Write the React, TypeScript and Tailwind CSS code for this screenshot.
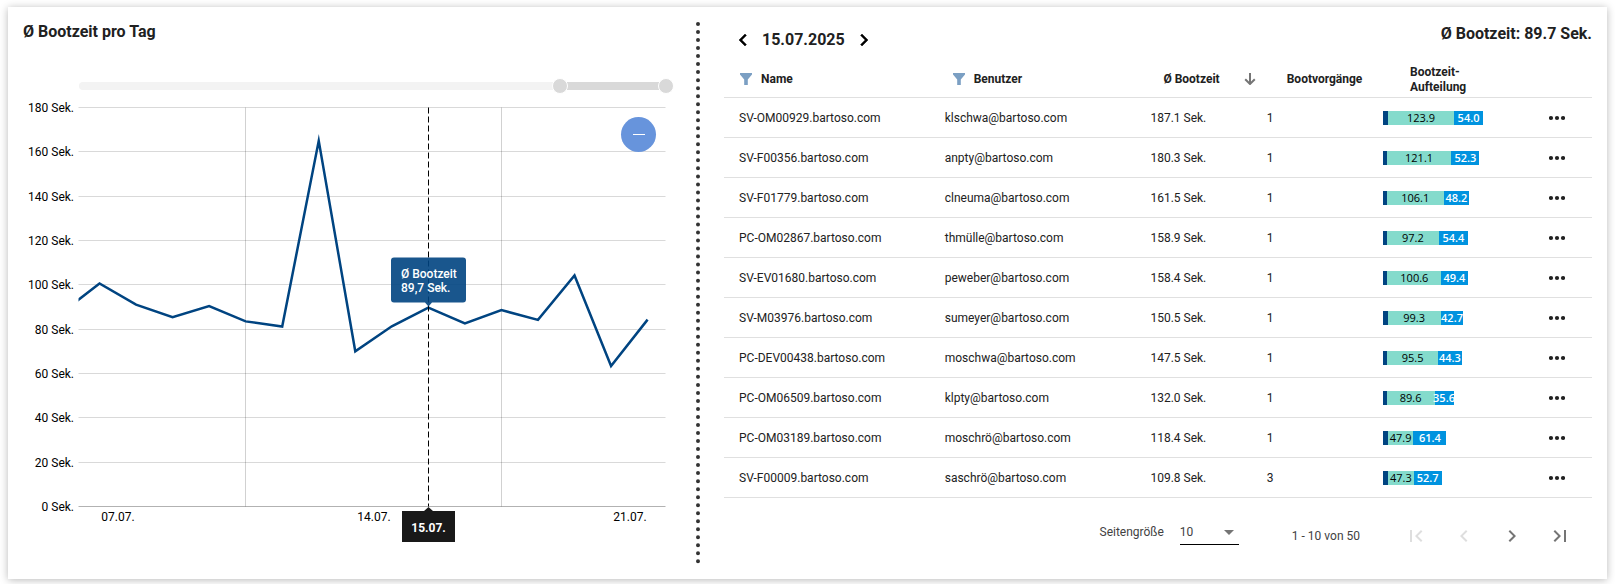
import { useState } from 'react';

type Boot = {
  name: string;
  benutzer: string;
  gesamt: number;
  anzahl: number;
  start: number;
  anmeldung: number;
};

const ROWS: Boot[] = [
  { name: 'SV-OM00929.bartoso.com', benutzer: 'klschwa@bartoso.com', gesamt: 187.1, anzahl: 1, start: 123.9, anmeldung: 54.0 },
  { name: 'SV-F00356.bartoso.com', benutzer: 'anpty@bartoso.com', gesamt: 180.3, anzahl: 1, start: 121.1, anmeldung: 52.3 },
  { name: 'SV-F01779.bartoso.com', benutzer: 'clneuma@bartoso.com', gesamt: 161.5, anzahl: 1, start: 106.1, anmeldung: 48.2 },
  { name: 'PC-OM02867.bartoso.com', benutzer: 'thmülle@bartoso.com', gesamt: 158.9, anzahl: 1, start: 97.2, anmeldung: 54.4 },
  { name: 'SV-EV01680.bartoso.com', benutzer: 'peweber@bartoso.com', gesamt: 158.4, anzahl: 1, start: 100.6, anmeldung: 49.4 },
  { name: 'SV-M03976.bartoso.com', benutzer: 'sumeyer@bartoso.com', gesamt: 150.5, anzahl: 1, start: 99.3, anmeldung: 42.7 },
  { name: 'PC-DEV00438.bartoso.com', benutzer: 'moschwa@bartoso.com', gesamt: 147.5, anzahl: 1, start: 95.5, anmeldung: 44.3 },
  { name: 'PC-OM06509.bartoso.com', benutzer: 'klpty@bartoso.com', gesamt: 132.0, anzahl: 1, start: 89.6, anmeldung: 35.6 },
  { name: 'PC-OM03189.bartoso.com', benutzer: 'moschrö@bartoso.com', gesamt: 118.4, anzahl: 1, start: 47.9, anmeldung: 61.4 },
  { name: 'SV-F00009.bartoso.com', benutzer: 'saschrö@bartoso.com', gesamt: 109.8, anzahl: 3, start: 47.3, anmeldung: 52.7 },
];

const MAX = 187.1;

// Mittelwerte pro Tag, der erste liegt links ausserhalb des sichtbaren Bereichs
const TAGE = [87.9, 100.6, 91.1, 85.4, 90.4, 83.5, 81.2, 165, 70, 81.3, 89.7, 82.6, 88.6, 84.2, 104.2, 63.4, 84.3];

const LEFT = 55.5;
const RIGHT = 642.5;
const TOP = 13.5;
const BOTTOM = 412.5;

const xOf = (i: number) => 76.5 + (i - 1) * 36.54;
const yOf = (v: number) => BOTTOM - (v / 180) * (BOTTOM - TOP);

function Chart() {
  const points = TAGE.map((v, i) => `${xOf(i)},${yOf(v)}`).join(' ');

  return (
    <svg viewBox="0 0 673 470" className="block w-full h-auto" role="img" aria-label="Ø Bootzeit pro Tag">
      <clipPath id="plot">
        <rect x={LEFT} y="0" width={RIGHT - LEFT} height={BOTTOM} />
      </clipPath>

      {[0, 20, 40, 60, 80, 100, 120, 140, 160, 180].map((v) => {
        const y = Math.round(yOf(v) - 0.5) + 0.5;
        return (
          <g key={v}>
            <line x1={LEFT} x2={RIGHT} y1={y} y2={y} stroke="#000" strokeOpacity={v === 0 ? 0.3 : 0.15} />
            <text x="51" y={y + 4} textAnchor="end" className="text-[12px] fill-black">{v} Sek.</text>
          </g>
        );
      })}
      <line x1="222.5" x2="222.5" y1={TOP} y2={BOTTOM} stroke="#000" strokeOpacity="0.18" />
      <line x1="478.5" x2="478.5" y1={TOP} y2={BOTTOM} stroke="#000" strokeOpacity="0.18" />

      <text x="95" y="427" textAnchor="middle" className="text-[12px] fill-black">07.07.</text>
      <text x="351" y="427" textAnchor="middle" className="text-[12px] fill-black">14.07.</text>
      <text x="607" y="427" textAnchor="middle" className="text-[12px] fill-black">21.07.</text>

      <polyline points={points} fill="none" stroke="#004481" strokeWidth="2.5" strokeMiterlimit="10" clipPath="url(#plot)" />
      <line x1="405.5" x2="405.5" y1={TOP} y2={BOTTOM} stroke="#000" strokeDasharray="6 3" />

      {/* Tooltip Wert */}
      <path d="M371 163.500h69a3 3 0 0 1 3 3v39a3 3 0 0 1-3 3h-31l-3.500 4-3.500-4h-31a3 3 0 0 1-3-3v-39a3 3 0 0 1 3-3z" fill="#004481" fillOpacity="0.9" />
      <text x="378" y="184" className="text-[12px] font-medium fill-white">Ø Bootzeit</text>
      <text x="378" y="198" className="text-[12px] font-medium fill-white">89,7 Sek.</text>

      {/* Tooltip Datum */}
      <path d="M379 417h22l4.500-4 4.500 4h22v31h-53z" fill="#191919" />
      <text x="405.5" y="438" textAnchor="middle" className="text-[12px] font-bold fill-white">15.07.</text>
    </svg>
  );
}

const thumb =
  'absolute -inset-x-2 inset-y-0 h-4 appearance-none bg-transparent pointer-events-none [&::-webkit-slider-thumb]:appearance-none [&::-webkit-slider-thumb]:pointer-events-auto [&::-webkit-slider-thumb]:size-4 [&::-webkit-slider-thumb]:rounded-full [&::-webkit-slider-thumb]:border [&::-webkit-slider-thumb]:border-white [&::-webkit-slider-thumb]:bg-[#d9d9d9]';

function RangeBar() {
  const [von, setVon] = useState(82);
  const [bis, setBis] = useState(100);

  return (
    <div className="relative h-4 mt-9 ml-14 mr-[30px] flex items-center">
      <div className="w-full h-2 rounded bg-[#f3f3f3]">
        <div className="h-2 bg-[#d9d9d9]" style={{ marginLeft: `${von}%`, width: `${bis - von}%` }} />
      </div>
      <input type="range" aria-label="Zeitraum von" value={von} onChange={(e) => setVon(Math.min(+e.target.value, bis))} className={thumb} />
      <input type="range" aria-label="Zeitraum bis" value={bis} onChange={(e) => setBis(Math.max(+e.target.value, von))} className={thumb} />
    </div>
  );
}

function Icon({ d, className = 'size-6' }: { d: string; className?: string }) {
  return (
    <svg viewBox="0 0 24 24" className={className} fill="currentColor" aria-hidden="true">
      <path d={d} />
    </svg>
  );
}

const CHEVRON_LEFT = 'M15.41 7.41L14 6l-6 6 6 6 1.41-1.41L10.83 12z';
const CHEVRON_RIGHT = 'M10 6L8.59 7.41 13.17 12l-4.58 4.59L10 18l6-6z';
const FIRST = 'M18.41 16.59L13.82 12l4.59-4.59L17 6l-6 6 6 6zM6 6h2v12H6z';
const LAST = 'M5.59 7.41L10.18 12l-4.59 4.59L7 18l6-6-6-6zM16 6h2v12h-2z';

function Filter({ label }: { label: string }) {
  return (
    <button aria-label={label} className="text-[#7b9fc3]">
      <svg viewBox="0 0 12 12" className="size-3" fill="currentColor" aria-hidden="true">
        <path d="M0 0h12v1.500L7.800 6.500V12H4.200V6.500L0 1.500z" />
      </svg>
    </button>
  );
}

function Aufteilung({ row }: { row: Boot }) {
  const rest = row.gesamt - row.start - row.anmeldung;
  return (
    <div className="flex w-[100px] h-3.5 text-[11px] leading-[14px] font-['Open_Sans',sans-serif]">
      <div className="bg-[#004481]" style={{ width: `${(rest / MAX) * 100}%` }} />
      <div className="bg-[#84dbcc] flex justify-center text-black" style={{ width: `${(row.start / MAX) * 100}%` }}>
        <span>{row.start.toFixed(1)}</span>
      </div>
      <div className="bg-[#0093df] flex justify-center text-white font-semibold" style={{ width: `${(row.anmeldung / MAX) * 100}%` }}>
        <span>{row.anmeldung.toFixed(1)}</span>
      </div>
    </div>
  );
}

export default function App() {
  return (
    <div className="bg-white px-2 pt-[7px] pb-[5px] font-[Roboto,sans-serif] text-[12px] text-[#212121]">
      <main className="grid grid-cols-[677fr_892fr] bg-white p-[15px] shadow-[0_1px_8px_rgba(0,0,0,0.28)]">
        <section className="border-r-4 border-dotted border-[#333]">
          <h2 className="text-[16px] leading-5 font-bold">Ø Bootzeit pro Tag</h2>
          <RangeBar />
          <div className="relative">
            <Chart />
            <button aria-label="Zoom zurücksetzen" className="absolute top-[23px] right-10 size-[35px] rounded-full bg-[#6794dc] flex items-center justify-center">
              <span className="w-3 h-px bg-white" />
            </button>
          </div>
        </section>

        <section className="pl-6 min-w-0">
          <header className="h-[39px] flex items-start justify-between text-[16px] font-bold">
            <div className="h-9 flex items-center gap-[7px]">
              <button aria-label="Vorheriger Tag" className="pl-[7px] text-black">
                <Icon d={CHEVRON_LEFT} className="size-6 stroke-current stroke-[0.5]" />
              </button>
              <span>15.07.2025</span>
              <button aria-label="Nächster Tag" className="text-black">
                <Icon d={CHEVRON_RIGHT} className="size-6 stroke-current stroke-[0.5]" />
              </button>
            </div>
            <h2 className="leading-6">Ø Bootzeit: 89.7 Sek.</h2>
          </header>

          <table className="w-full table-fixed border-separate border-spacing-0 text-left [&_th]:border-b [&_td]:border-b [&_th]:border-[#e0e0e0] [&_td]:border-[#e0e0e0]">
            <thead>
              <tr className="h-[37px] [&_th]:p-0 [&_th]:font-bold">
                <th className="w-[23.7%]">
                  <div className="flex items-center gap-[9px] pl-4">
                    <Filter label="Name filtern" />
                    Name
                  </div>
                </th>
                <th className="w-[23.7%]">
                  <div className="flex items-center gap-[9px] pl-[23px]">
                    <Filter label="Benutzer filtern" />
                    Benutzer
                  </div>
                </th>
                <th className="w-[13.4%]" aria-sort="descending">
                  <div className="flex items-center gap-6 pl-7 whitespace-nowrap">
                    Ø Bootzeit
                    <svg viewBox="0 0 12 12" className="size-3 shrink-0 text-[#757575]" fill="none" stroke="currentColor" strokeWidth="2" aria-hidden="true">
                      <path d="M6 0v11M1.200 6.200L6 11l4.800-4.800" />
                    </svg>
                  </div>
                </th>
                <th className="w-[13.4%]"><div className="pl-[35px]">Bootvorgänge</div></th>
                <th className="w-[13.4%]"><div className="pl-[42px] pt-px leading-[15px]">Bootzeit-<br />Aufteilung</div></th>
                <th />
              </tr>
            </thead>
            <tbody>
              {ROWS.map((row) => (
                <tr key={row.name} className="h-10 [&_td]:py-0 [&_td]:pl-[15px]">
                  <td>{row.name}</td>
                  <td>{row.benutzer}</td>
                  <td>{row.gesamt.toFixed(1)} Sek.</td>
                  <td>{row.anzahl}</td>
                  <td><Aufteilung row={row} /></td>
                  <td>
                    <div className="flex justify-end pr-[27px]">
                      <button aria-label={`Aktionen für ${row.name}`}>
                        <svg viewBox="0 0 16 16" className="size-4" fill="currentColor" aria-hidden="true">
                          <circle cx="2" cy="8" r="2.100" />
                          <circle cx="8" cy="8" r="2.100" />
                          <circle cx="14" cy="8" r="2.100" />
                        </svg>
                      </button>
                    </div>
                  </td>
                </tr>
              ))}
            </tbody>
          </table>

          <footer className="mt-5 h-9 flex items-center justify-end pr-5 text-[#424242]">
            <label htmlFor="size" className="mr-4 pb-2">Seitengröße</label>
            <div className="relative w-[59px] mb-2 h-[25px] border-b border-black">
              <select id="size" defaultValue="10" className="w-full h-6 appearance-none bg-transparent">
                <option>10</option>
                <option>25</option>
                <option>50</option>
              </select>
              <svg viewBox="0 0 10 5" className="absolute right-[5px] top-2.5 w-2.5 h-[5px] pointer-events-none" fill="#757575" aria-hidden="true">
                <path d="M0 0h10L5 5z" />
              </svg>
            </div>
            <span className="ml-[53px] mr-11">1 - 10 von 50</span>
            <div className="flex gap-6 text-[#757575]">
              <button aria-label="Erste Seite" disabled className="text-[#dedede]"><Icon d={FIRST} /></button>
              <button aria-label="Vorherige Seite" disabled className="text-[#dedede]"><Icon d={CHEVRON_LEFT} /></button>
              <button aria-label="Nächste Seite"><Icon d={CHEVRON_RIGHT} /></button>
              <button aria-label="Letzte Seite"><Icon d={LAST} /></button>
            </div>
          </footer>
        </section>
      </main>
    </div>
  );
}
